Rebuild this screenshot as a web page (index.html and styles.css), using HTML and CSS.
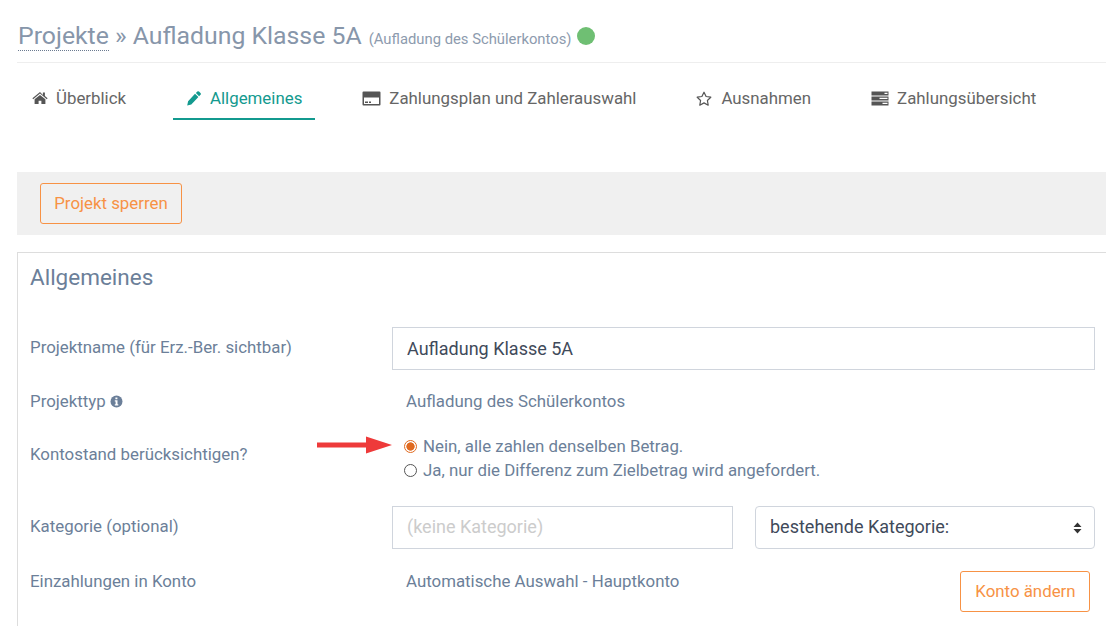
FILE: index.html
```html
<!DOCTYPE html>
<html lang="de">
<head>
<meta charset="utf-8">
<title>Aufladung Klasse 5A</title>
<link rel="stylesheet" href="styles.css">
</head>
<body>
<div class="page">
  <header class="head">
    <h1 class="title"><a class="crumb">Projekte</a> » Aufladung Klasse 5A <small class="sub">(Aufladung des Schülerkontos)</small><span class="dot"></span></h1>
  </header>
  <nav class="tabs">
    <a class="tab t1"><svg class="ico" width="16" height="14" viewBox="0 0 16 14"><path fill="#555" d="M8 1 .4 7.300l.8.900L8 2.600l6.800 5.600.8-.9-2.700-2.300V1.500h-2v2.500zM2.600 8.200V13h4V9.800h2.800V13h4V8.200L8 3.900z"/></svg>Überblick</a>
    <a class="tab t2 active"><svg class="ico" width="14" height="15" viewBox="0 0 14 15"><path fill="#139a8f" d="M10.300 .6a1.200 1.200 0 0 1 1.700 0l1.500 1.500a1.200 1.200 0 0 1 0 1.700l-1.400 1.400-3.200-3.200zM8 2.700l3.400 3.400-7.100 7.300-4.100 1.200.9-4.300z"/></svg>Allgemeines</a>
    <a class="tab t3"><svg class="ico" width="19" height="15" viewBox="0 0 19 15"><path fill="#555" fill-rule="evenodd" d="M1.500.500h16a1 1 0 0 1 1 1v12a1 1 0 0 1-1 1h-16a1 1 0 0 1-1-1v-12a1 1 0 0 1 1-1zM2 6.500V13h15V6.500zM3 10.500h3V12H3zm4 0h2V12H7z"/></svg>Zahlungsplan und Zahlerauswahl</a>
    <a class="tab t4"><svg class="ico" width="16" height="15" viewBox="0 0 16 15"><path fill="none" stroke="#555" stroke-width="1.200" stroke-linejoin="round" d="M8 1.200l2.100 4.300 4.700.7-3.400 3.300.8 4.700L8 11.900l-4.200 2.300.8-4.700L1.200 6.200l4.700-.7z"/></svg>Ausnahmen</a>
    <a class="tab t5"><svg class="ico" width="18" height="15" viewBox="0 0 18 15"><path fill="#555" fill-rule="evenodd" d="M.5.500h17v4h-17zm13 1.300v1.200h3V1.800zM.5 5.500h17v4h-17zm8 1.300V8h8V6.800zM.5 10.500h17v4h-17zm11 1.300V13h5v-1.200z"/></svg>Zahlungsübersicht</a>
  </nav>
  <div class="toolbar"><button class="btn">Projekt sperren</button></div>
  <section class="panel">
    <h2 class="panel-title">Allgemeines</h2>
    <div class="row r-name">
      <label class="lbl">Projektname (für Erz.-Ber. sichtbar)</label>
      <input class="field" value="Aufladung Klasse 5A">
    </div>
    <div class="row r-type">
      <span class="lbl">Projekttyp <svg class="info" width="13" height="13" viewBox="0 0 13 13"><circle cx="6.500" cy="6.500" r="6" fill="#6b7f99"/><path fill="#fff" d="M5.400 2.500h2v1.700h-2zM4.800 5.300h2.700v3.900h.8v1.200H4.800V9.200h.8V6.500h-.8z"/></svg></span>
      <span class="val">Aufladung des Schülerkontos</span>
    </div>
    <div class="row r-radio">
      <span class="lbl">Kontostand berücksichtigen?</span>
      <div class="radios">
        <svg class="arrow" width="76" height="18" viewBox="0 0 76 18"><path fill="#ee3a3a" d="M0 6.500h49V0.500L75 9 49 17.500V11.500H0z"/></svg>
        <div class="opt"><span class="radio on"></span>Nein, alle zahlen denselben Betrag.</div>
        <div class="opt"><span class="radio"></span>Ja, nur die Differenz zum Zielbetrag wird angefordert.</div>
      </div>
    </div>
    <div class="row r-cat">
      <span class="lbl">Kategorie (optional)</span>
      <input class="field cat" placeholder="(keine Kategorie)">
      <div class="select">bestehende Kategorie:<svg class="carets" width="9" height="12" viewBox="0 0 9 12"><path fill="#333" d="M4.500 .5 8.500 5H.5zM.5 7h8l-4 4.500z"/></svg></div>
    </div>
    <div class="row r-acc">
      <span class="lbl">Einzahlungen in Konto</span>
      <span class="val">Automatische Auswahl - Hauptkonto</span>
      <button class="btn acc">Konto ändern</button>
    </div>
  </section>
</div>
</body>
</html>
```
FILE: styles.css
```css
html, body { margin: 0; padding: 0; height: 626px; overflow: hidden; background: #fff; }
body { font-family: Roboto, "Liberation Sans", sans-serif; font-size: 16.850px; color: #6c7f99; }
.page { margin-left: 17px; width: 1089px; }
.head { height: 62px; border-bottom: 1px solid #eee; box-sizing: content-box; }
.title { margin: 0; padding: 20px 0 0 1px; font-size: 24.800px; font-weight: 400; line-height: 32px; color: #8796aa; white-space: nowrap; }
.crumb { color: #8796aa; border-bottom: 1px dotted #6b7a90; }
.sub { font-size: 14.800px; color: #8d9bae; margin-left: 1px; }
.dot { display: inline-block; width: 18px; height: 18px; border-radius: 50%; background: #6fbf73; margin-left: 6px; vertical-align: -1px; }
.tabs { display: flex; height: 57px; }
.tab { display: flex; align-items: center; height: 57px; padding-top: 15px; border-bottom: 2px solid transparent; box-sizing: border-box; color: #666; white-space: nowrap; }
.tab.active { color: #139a8f; border-bottom-color: #139a8f; }
.ico { margin-right: 8px; flex: none; }
.t1 { margin-left: 15px; }
.t2 { margin-left: 47px; padding-left: 14px; padding-right: 13px; }
.t2 .ico { margin-right: 9px; }
.t3 { margin-left: 47px; }
.t4 { margin-left: 60px; }
.t4 .ico { margin-right: 9px; }
.t5 { margin-left: 60px; }
.toolbar { margin-top: 52px; background: #f0f0f0; height: 63px; padding: 11px 23px; box-sizing: border-box; }
.btn { font: inherit; color: #f79245; background: transparent; border: 1px solid #f79245; border-radius: 3px; height: 41px; width: 142px; padding: 0 0 2px; cursor: pointer; }
.panel { margin-top: 17px; border: 1px solid #ddd; border-right: 0; height: 400px; padding: 0 0 0 12px; box-sizing: border-box; }
.panel-title { margin: 0; padding: 10px 0 1px; font-size: 22.500px; font-weight: 400; line-height: 28px; color: #6c7f99; }
.row { display: flex; align-items: flex-start; }
.lbl { width: 362px; flex: none; }
.field { font: inherit; font-size: 18px; color: #3f4a5a; border: 1px solid #d0d5dd; height: 43px; box-sizing: border-box; padding: 0 14px; background: #fff; outline: 0; border-radius: 0; }
.r-name { margin-top: 35px; }
.r-name .lbl { padding-top: 10px; }
.r-name .field { width: 703px; }
.r-type { margin-top: 21px; }
.val { margin-left: 14px; }
.info { vertical-align: -1px; }
.r-radio { margin-top: 23px; position: relative; }
.r-radio .lbl { padding-top: 10px; }
.radios { margin-left: 12px; position: relative; }
.opt { height: 24px; line-height: 24px; display: flex; align-items: center; white-space: nowrap; }
.radio { width: 13px; height: 13px; border: 1px solid #555; border-radius: 50%; box-sizing: border-box; margin-right: 6px; flex: none; background: #fff; }
.radio.on { border-color: #e06a20; background: radial-gradient(circle, #e06a20 0 3.800px, #fff 4.500px); }
.arrow { position: absolute; left: -87px; top: 2px; }
.r-cat { margin-top: 24px; }
.r-cat .lbl { padding-top: 10px; }
.field.cat { width: 341px; padding-bottom: 2px; }
.field.cat::placeholder { color: #cccccc; opacity: 1; }
.select { width: 340px; height: 43px; margin-left: 22px; box-sizing: border-box; border: 1px solid #d0d5dd; border-radius: 4px; padding: 0 14px 2px; display: flex; align-items: center; justify-content: space-between; color: #3f4a5a; font-size: 18px; }
.carets { margin-right: -2px; margin-top: 2px; }
.r-acc { margin-top: 22px; }
.btn.acc { width: 130px; margin-left: 281px; margin-top: 0; }
```
